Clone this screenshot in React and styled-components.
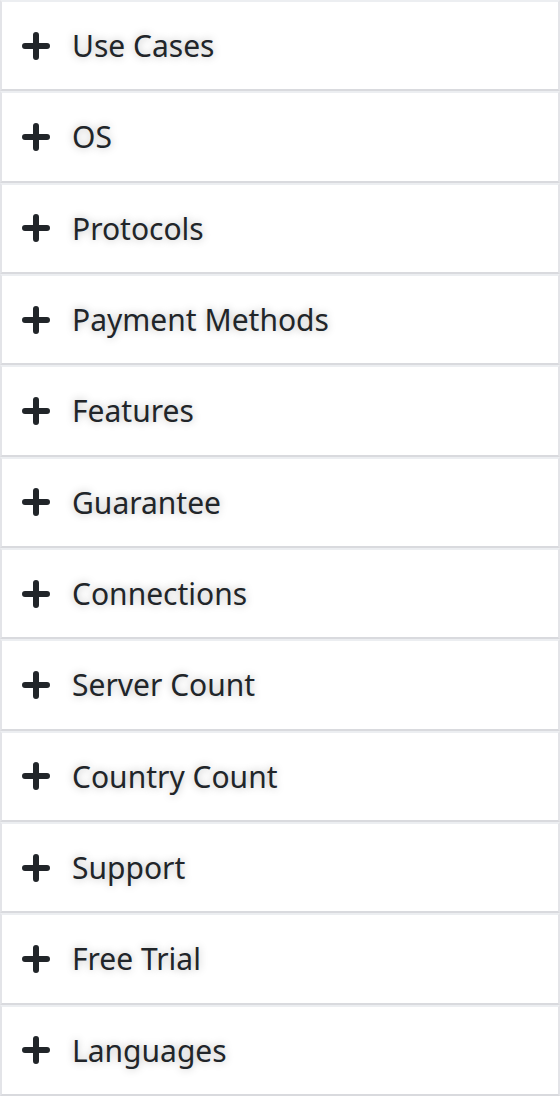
import React from 'react';
import styled, { createGlobalStyle } from 'styled-components';

const GlobalStyle = createGlobalStyle`
  html, body {
    margin: 0;
    padding: 0;
    background: #fff;
  }
  body {
    font-family: "Noto Sans", "Open Sans", sans-serif;
  }
`;

const items = [
  'Use Cases',
  'OS',
  'Protocols',
  'Payment Methods',
  'Features',
  'Guarantee',
  'Connections',
  'Server Count',
  'Country Count',
  'Support',
  'Free Trial',
  'Languages',
];

const Accordion = styled.div`
  width: 560px;
  height: 1096px;
  display: flex;
  flex-direction: column;
`;

const Item = styled.button`
  flex: 1;
  display: flex;
  align-items: center;
  gap: 21px;
  padding: 0 0 0 19px;
  background: #fff;
  border: 2px solid #e3e4e8;
  border-bottom-color: #d9dade;
  border-top-color: #eceef1;
  margin: 0;
  cursor: pointer;
  text-align: left;
  font-family: inherit;
`;

const Label = styled.span`
  font-size: 30px;
  color: #212529;
  text-shadow: 0 0 8px rgba(0, 0, 0, 0.28);
  letter-spacing: 0;
`;

// thick rounded plus used as the collapsed marker
const Plus = () => (
  <svg width="30" height="30" viewBox="0 0 30 30">
    <path
      d="M15 4v22M4 15h22"
      stroke="#212529"
      strokeWidth="6"
      strokeLinecap="round"
      fill="none"
    />
  </svg>
);

export default function App() {
  return (
    <>
      <GlobalStyle />
      <Accordion>
        {items.map(name => (
          <Item key={name}>
            <Plus />
            <Label>{name}</Label>
          </Item>
        ))}
      </Accordion>
    </>
  );
}
